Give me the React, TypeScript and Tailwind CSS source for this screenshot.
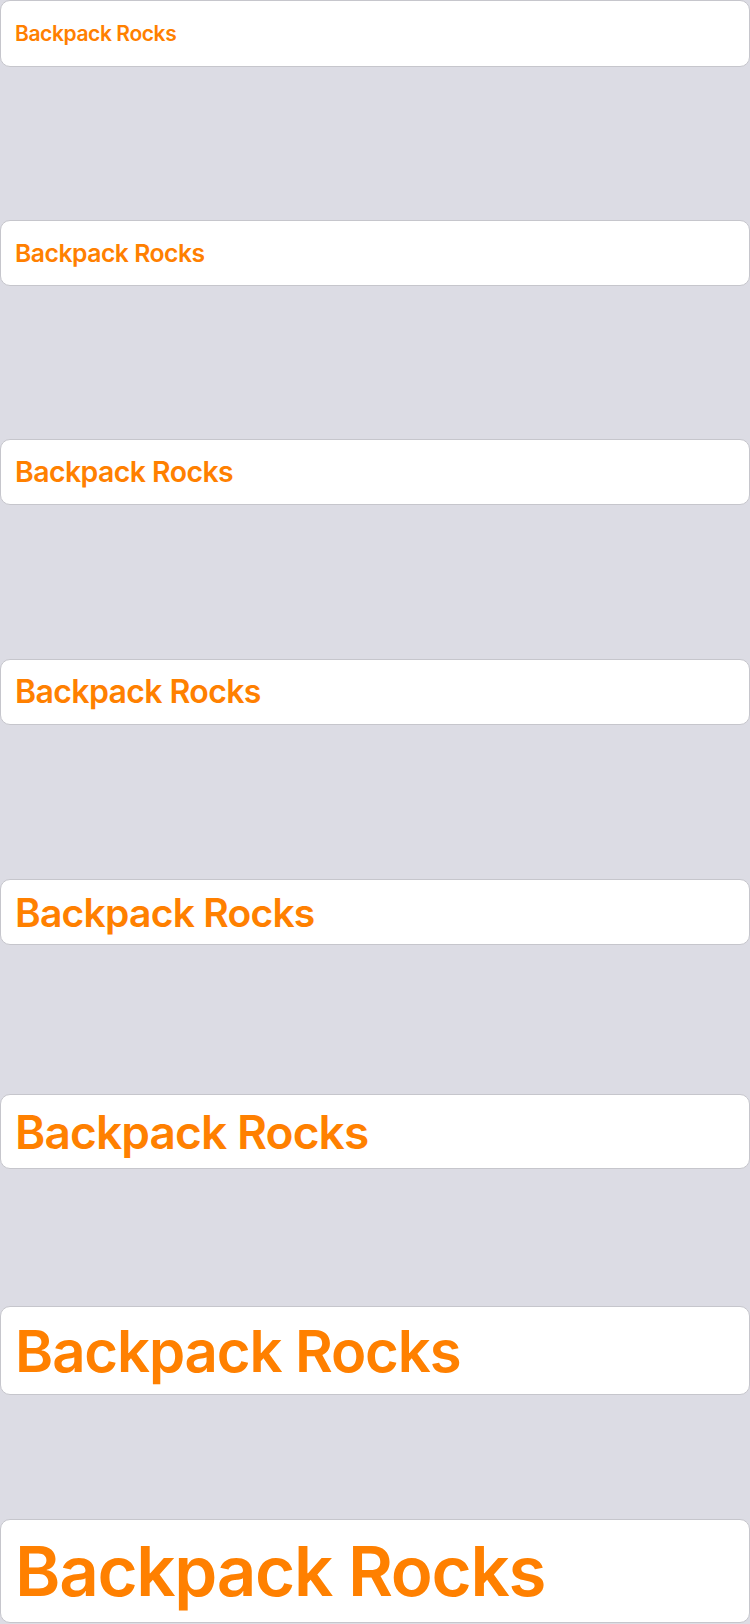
const rows = [
  { size: "text-[21px]", h: "h-[67px]", mb: "mb-[153px]" },
  { size: "text-[24.7px]", h: "h-[66px]", mb: "mb-[153px]" },
  { size: "text-[28.4px]", h: "h-[66px]", mb: "mb-[154px]" },
  { size: "text-[32px]", h: "h-[66px]", mb: "mb-[154px]" },
  { size: "text-[39px]", h: "h-[66px]", mb: "mb-[149px]" },
  { size: "text-[46px]", h: "h-[75px]", mb: "mb-[137px]" },
  { size: "text-[58px]", h: "h-[89px]", mb: "mb-[124px]" },
  { size: "text-[69px]", h: "h-[104px]", mb: "mb-0" },
];

export default function App() {
  return (
    <div className="w-[750px] h-[1624px] overflow-hidden bg-[#dcdce4] font-['Inter','Liberation_Sans',sans-serif]">
      {rows.map((row, i) => (
        <div
          key={i}
          className={`flex items-center ${row.h} ${row.mb} rounded-[10px] border border-[#c6c6cc] bg-white px-[14px]`}
        >
          <span className={`${row.size} font-semibold leading-none tracking-[-0.019em] text-[#ff8000]`}>
            Backpack Rocks
          </span>
        </div>
      ))}
    </div>
  );
}
